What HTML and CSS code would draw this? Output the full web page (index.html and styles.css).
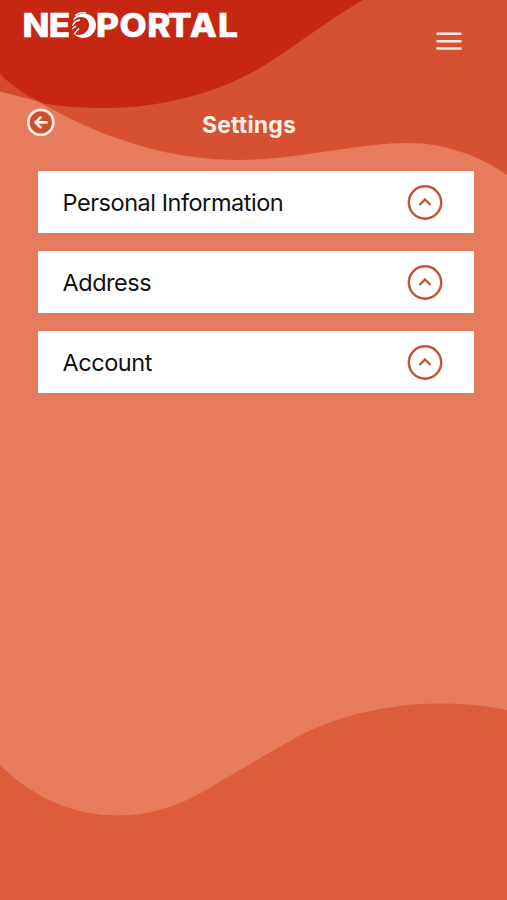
FILE: index.html
```html
<!DOCTYPE html>
<html lang="en">
<head>
<meta charset="utf-8">
<title>Settings</title>
<link rel="stylesheet" href="styles.css">
</head>
<body>
<svg class="backdrop" viewBox="0 0 507 900" aria-hidden="true">
  <path class="wave-bottom" d="M0 765C35 799 74 815.500 119 815.500C149 815.500 177 806 199 794L288 742C332 716 389 703.500 440 703.500C464 703.500 488 706 507 710V900H0Z"/>
  <path class="wave-overlap" d="M0 0V91.500L45 103L70 80V0Z"/>
  <path class="wave-middle" d="M0 74C14 88 30 98 48 107C106 139 170 160 239 160C294 160 360 143 408 143C445 143 480 156 507 175V0H0Z"/>
  <path class="wave-top" d="M0 0V74C13 87 27 96 43 103.500C63 106.500 82 108 105 108C162 108 219 93 265 65C298 44 330 19 363 0Z"/>
</svg>
<div class="screen">
  <header class="topbar">
    <svg class="logo" viewBox="0 -7 222 50" role="img" aria-label="Neoportal">
      <text class="logo-text" transform="scale(1.1 1)" y="29.700" x="0.400 24.300">NE</text>
      <path class="logo-mark" d="M54 9C62 3 74 8 74 18C74 30 60 35 52 27C60 30 67 25 67 18C67 13 64 10 59 10C55 10 53 12 51 14Q51 11 54 9Z"/>
      <path class="logo-feather" d="M53 8.500Q58 4.500 64 6M50.500 19Q52 14 58 13M52 27L57 21.500M50 22L54 19"/>
      <text class="logo-text" transform="scale(1.1 1)" y="29.700" x="67.300 88.700 113.900 132.600 152.600 178.300">PORTAL</text>
    </svg>
    <button class="icon-button" aria-label="Menu">
      <svg class="menu-icon" viewBox="0 0 26 20"><path d="M1.500 2.700H24.500M1.500 10.200H24.500M1.500 17.500H24.500"/></svg>
    </button>
  </header>
  <div class="title-row">
    <button class="icon-button" aria-label="Back">
      <svg class="back-icon" viewBox="0 0 28 28"><circle cx="13.800" cy="14.400" r="12.500"/><path d="M19.500 14.400H8.500M13.500 9.400L8.500 14.400L13.500 19.400"/></svg>
    </button>
    <h1 class="title">Settings</h1>
  </div>
  <main class="sections">
    <button class="section"><span class="section-label">Personal Information</span><svg class="chevron" viewBox="0 0 36 36"><circle cx="18" cy="17.500" r="16.200"/><path d="M12.500 20L18 14.500L23.500 20"/></svg></button>
    <button class="section"><span class="section-label">Address</span><svg class="chevron" viewBox="0 0 36 36"><circle cx="18" cy="17.500" r="16.200"/><path d="M12.500 20L18 14.500L23.500 20"/></svg></button>
    <button class="section"><span class="section-label">Account</span><svg class="chevron" viewBox="0 0 36 36"><circle cx="18" cy="17.500" r="16.200"/><path d="M12.500 20L18 14.500L23.500 20"/></svg></button>
  </main>
</div>
</body>
</html>
```
FILE: styles.css
```css
* { box-sizing: border-box; }
body { margin: 0; background: #e77b5d; font-family: Inter, "Liberation Sans", sans-serif; }
button { border: 0; padding: 0; background: none; font: inherit; color: inherit; }
svg { display: block; flex: none; }
.backdrop { position: absolute; z-index: -1; top: 0; left: 0; width: 507px; height: 900px; }
.wave-bottom { fill: #dd5c39; }
.wave-overlap { fill: #d6492e; }
.wave-middle { fill: #d65132; }
.wave-top { fill: #c62713; }
.screen { width: 507px; height: 900px; overflow: hidden; }
.topbar { display: flex; justify-content: space-between; height: 108px; padding: 0 45px 0 22px; }
.topbar .icon-button { align-self: flex-start; margin-top: 31px; }
.logo { width: 222px; height: 50px; overflow: visible; }
.logo-text { font-size: 32px; font-weight: 800; fill: #fff; stroke: #fff; stroke-width: 0.5; }
.logo-mark { fill: #fff; }
.logo-feather { fill: none; stroke: #fff; stroke-width: 1.3; }
.menu-icon { width: 26px; height: 20px; fill: none; stroke: #ffece3; stroke-width: 2.6; stroke-linecap: round; }
.title-row { display: flex; align-items: flex-start; height: 63px; padding-left: 27px; }
.back-icon { width: 28px; height: 28px; fill: #c8512f; stroke: #ffece3; stroke-width: 2.7; stroke-linecap: round; stroke-linejoin: round; }
.title { margin: 3px 0 0 147px; color: #fff0e9; font-size: 23px; line-height: 28px; font-weight: 650; letter-spacing: 0.15px; }
.sections { display: grid; gap: 18px; padding: 0 33px 0 38px; }
.section { display: flex; align-items: center; justify-content: space-between; height: 62px; padding: 1px 31px 0 24.5px; background: #fff; }
.section-label { color: #111; font-size: 23.5px; letter-spacing: -0.46px; }
.chevron { width: 36px; height: 36px; fill: none; stroke: #c15538; stroke-width: 2.4; }
```
